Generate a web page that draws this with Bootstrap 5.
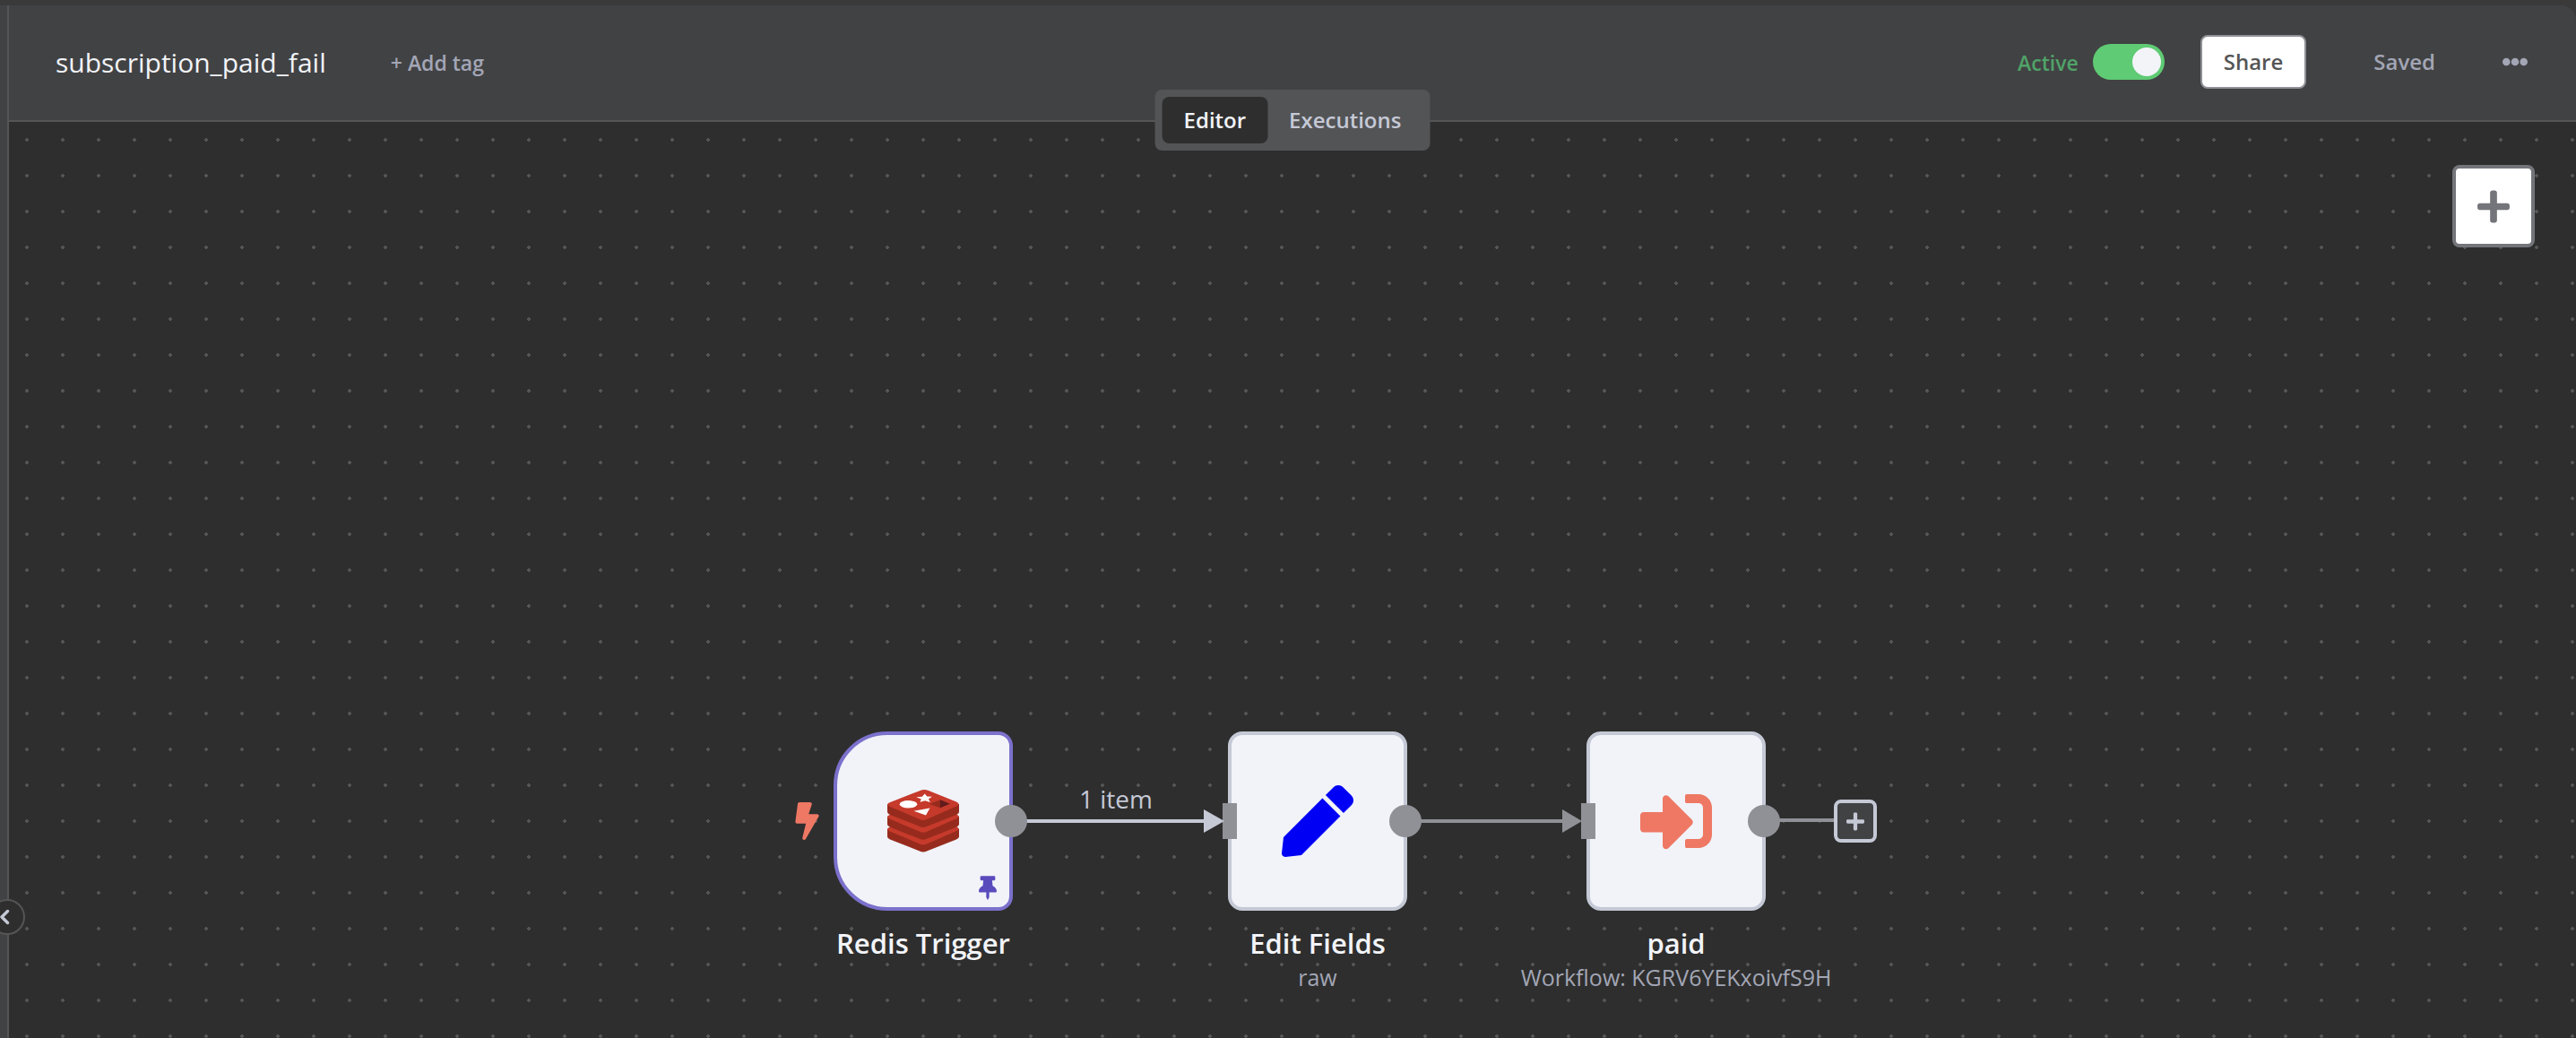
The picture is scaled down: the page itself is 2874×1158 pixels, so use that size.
<!DOCTYPE html>
<html lang="en">
<head>
<meta charset="utf-8">
<meta name="viewport" content="width=device-width, initial-scale=1">
<title>subscription_paid_fail</title>
<link href="https://cdn.jsdelivr.net/npm/bootstrap@5.3.0/dist/css/bootstrap.min.css" rel="stylesheet">
<style>
  :root {
    --panel: #414244;
    --canvas: #2e2e2e;
    --line: #555555;
    --muted: #a3a6b5;
    --soft: #c5c9d6;
    --bright: #f2f4f8;
  }
  body {
    font-family: "Open Sans", "Noto Sans", sans-serif;
    font-size: 24px;
    line-height: 32px;
    color: var(--bright);
    background: #3a3a3a;
    border-top: 6px solid #3a3a3a;
  }
  svg { display: block; }
  .side-rail { width: 10px; background: var(--panel); border-right: 2px solid var(--line); }
  .rail-toggle {
    left: -12px; bottom: 115px; width: 40px; height: 40px; z-index: 3;
    background: var(--canvas); border: 2px solid var(--line); border-radius: 50%;
  }
  .rail-toggle svg { margin-left: 9px; }
  .top-bar {
    height: 130px; padding: 0 46px 2px 52px;
    background: var(--panel); border-bottom: 2px solid var(--line);
    border-top-right-radius: 16px;
  }
  .flow-name { padding-top: 2px; font-size: 30px; line-height: 40px; font-weight: 400; }
  .tag-link, .active-label { padding-top: 2px; font-size: 23px; font-weight: 600; }
  .tag-link { margin-left: 72px; color: var(--muted); }
  .active-label { color: #50a368; }
  .form-switch .toggle-input {
    width: 80px; height: 40px; border: 0; cursor: pointer;
    background-color: #5fcb74; background-size: 40px 40px;
  }
  .form-switch .toggle-input:checked {
    background-color: #5fcb74;
    background-image: url("data:image/svg+xml,%3csvg xmlns='http://www.w3.org/2000/svg' viewBox='0 0 40 40'%3e%3ccircle cx='20' cy='20' r='16' fill='%23f2f4f8'/%3e%3c/svg%3e");
  }
  .share-btn {
    height: 60px; padding: 0 24px; margin-left: 40px;
    background: #fff; color: #555; border: 2px solid #909196; border-radius: 8px;
    font-size: 24px; font-weight: 600;
  }
  .saved-note { margin-left: 75px; color: var(--muted); font-weight: 600; }
  .more-btn { margin-left: 67px; padding: 8px; }
  .view-tabs {
    top: 94px; left: 50%; transform: translateX(-50%); z-index: 2;
    padding: 8px; background: #535456; border-radius: 8px;
  }
  .view-tabs .nav-link {
    height: 52px; padding: 10px 24px; border-radius: 8px;
    color: var(--soft); font-weight: 600;
  }
  .view-tabs .nav-link.active { background: var(--canvas); color: var(--bright); }
  .flow-canvas {
    background-color: var(--canvas);
    background-image: radial-gradient(circle at 20px 20px, var(--line) 0 2px, transparent 2px);
    background-size: 40px 40px;
  }
  .add-node {
    top: 48px; right: 46px; width: 92px; height: 92px;
    background: #fff; border: 4px solid #73757a; border-radius: 8px;
  }
  .wires { left: 0; top: 0; }
  .wire-label { left: 1146px; top: 735px; width: 178px; font-size: 28px; line-height: 40px; color: var(--soft); }
  .flow-node { width: 200px; top: 680px; }
  .node-redis { left: 920px; }
  .node-edit { left: 1360px; }
  .node-paid { left: 1760px; }
  .node-box {
    width: 200px; height: 200px; background: #f1f3f9;
    border: 4px solid var(--soft); border-radius: 16px;
  }
  .node-redis .node-box { border-color: #7b71cc; border-radius: 60px 16px 16px 60px; }
  .node-title { margin-top: 16px; font-size: 31px; line-height: 40px; font-weight: 600; white-space: nowrap; }
  .node-sub { font-size: 25px; line-height: 36px; color: var(--muted); white-space: nowrap; }
  .pin-mark { right: 14px; bottom: 8px; }
  .bolt-mark { left: -43px; top: 79px; }
  .add-next {
    left: 2036px; top: 756px; width: 48px; height: 48px;
    background: var(--panel); border: 4px solid var(--soft); border-radius: 8px;
  }
</style>
</head>
<body class="vh-100 d-flex overflow-hidden position-relative">
<aside class="side-rail flex-shrink-0">
  <button type="button" class="rail-toggle position-absolute p-0 d-flex align-items-center" aria-label="Expand sidebar">
    <svg width="12" height="18" viewBox="0 0 12 18" fill="none" stroke="#c5c9d6" stroke-width="3.4" stroke-linecap="round" stroke-linejoin="round"><path d="M9.5 2.5 3 9l6.500 6.500"/></svg>
  </button>
</aside>

<div class="flex-grow-1 d-flex flex-column position-relative">
  <header class="top-bar d-flex align-items-center flex-shrink-0">
    <h1 class="flow-name mb-0">subscription_paid_fail</h1>
    <a href="#" class="tag-link text-decoration-none">+ Add tag</a>
    <div class="form-check form-switch d-flex align-items-center gap-3 ms-auto mb-0 p-0">
      <label class="active-label" for="active-switch">Active</label>
      <input class="form-check-input toggle-input m-0" type="checkbox" role="switch" id="active-switch" checked>
    </div>
    <button type="button" class="btn share-btn">Share</button>
    <span class="saved-note">Saved</span>
    <button type="button" class="btn border-0 more-btn" aria-label="More actions">
      <svg width="28" height="10" viewBox="0 0 28 10" fill="#a3a6b5"><circle cx="4.300" cy="5" r="4.300"/><circle cx="14" cy="5" r="4.300"/><circle cx="23.700" cy="5" r="4.300"/></svg>
    </button>
  </header>

  <nav class="view-tabs nav flex-nowrap position-absolute">
    <a class="nav-link active" href="#" aria-current="page">Editor</a>
    <a class="nav-link" href="#">Executions</a>
  </nav>

  <main class="flow-canvas flex-grow-1 position-relative overflow-hidden">
    <button type="button" class="add-node position-absolute d-flex align-items-center justify-content-center p-0" aria-label="Add node">
      <svg width="36" height="41" viewBox="0 0 448 512" fill="#73757a"><path d="M416 208H272V64c0-17.670-14.330-32-32-32h-32c-17.670 0-32 14.330-32 32v144H32c-17.670 0-32 14.330-32 32v32c0 17.670 14.330 32 32 32h144v144c0 17.670 14.330 32 32 32h32c17.670 0 32-14.330 32-32V304h144c17.670 0 32-14.330 32-32v-32c0-17.670-14.330-32-32-32z"/></svg>
    </button>

    <section class="flow-node node-redis position-absolute d-flex flex-column align-items-center">
      <svg class="bolt-mark position-absolute" width="27" height="42" viewBox="0 0 320 512" fill="#ee7864"><path d="M296 160H180.600l42.600-129.800C227.200 15 215.700 0 200 0H56C44 0 33.800 8.900 32.200 20.800l-32 240C-1.700 275.200 9.500 288 24 288h118.700L96.600 482.500c-3.600 15.200 8 29.500 23.300 29.500 8.400 0 16.400-4.400 20.800-12l176-304c9.300-15.900-2.200-36-20.700-36z"/></svg>
      <div class="node-box position-relative d-flex align-items-center justify-content-center">
        <svg width="80" height="70" viewBox="0 0 80 70">
          <defs>
            <g id="redis-slab">
              <path fill="#962b1d" d="M0 16V25Q0 26.500 3 28L36 41Q40 43 44 41L77 28Q80 26.500 80 25V16z"/>
              <path fill="#c63a2b" d="M2 14.500 36 1.200Q41-1 46 1L77 13.500Q82 16 77 18.500L44 33Q40 35 36 33L3 19Q-2 16.500 2 14.500z"/>
            </g>
          </defs>
          <use href="#redis-slab" y="27.500"/>
          <use href="#redis-slab" y="13.800"/>
          <use href="#redis-slab"/>
          <ellipse cx="23.500" cy="16.200" rx="9.800" ry="4.200" fill="#fff"/>
          <path fill="#fff" d="M41.700 4.600 44.300 7.400 50 7.800 46 10.300 47.800 14 42 12.300 36.500 13.800 37.800 10.500 32.300 8.300 38.800 7.800zM29.500 23.700 47.500 20.500 43 28.600z"/>
          <path fill="#962b1d" d="M47 16 59 11.300V20.300z"/>
          <path fill="#621b1c" d="M59 11.300 70 15.700 59 20.300z"/>
        </svg>
        <svg class="pin-mark position-absolute" width="20" height="27" viewBox="0 0 384 512" fill="#5a4bbd"><path d="M298.028 214.267L285.793 96H328c13.255 0 24-10.745 24-24V24c0-13.255-10.745-24-24-24H56C42.745 0 32 10.745 32 24v48c0 13.255 10.745 24 24 24h42.207L85.972 214.267C37.465 236.820 0 277.261 0 328c0 13.255 10.745 24 24 24h136v104.007c0 1.242.289 2.467.845 3.578l24 48c2.941 5.882 11.364 5.893 14.311 0l24-48a8.008 8.008 0 0 0 .845-3.578V352h136c13.255 0 24-10.745 24-24-.001-51.029-37.983-91.330-85.973-113.733z"/></svg>
      </div>
      <div class="node-title">Redis Trigger</div>
    </section>

    <section class="flow-node node-edit position-absolute d-flex flex-column align-items-center">
      <div class="node-box d-flex align-items-center justify-content-center">
        <svg width="80" height="80" viewBox="0 0 512 512" fill="#0000f5"><path d="M290.740 93.240l128.020 128.020-277.990 277.990-114.140 12.600C11.350 513.540-1.560 500.620.140 485.340l12.700-114.220 277.900-277.880zm207.200-19.060l-60.110-60.110c-18.750-18.750-49.160-18.750-67.910 0l-56.550 56.550 128.020 128.020 56.550-56.550c18.750-18.760 18.750-49.160 0-67.910z"/></svg>
      </div>
      <div class="node-title">Edit Fields</div>
      <div class="node-sub">raw</div>
    </section>

    <section class="flow-node node-paid position-absolute d-flex flex-column align-items-center">
      <div class="node-box d-flex align-items-center justify-content-center">
        <svg width="80" height="80" viewBox="0 0 512 512" fill="#ee7864"><path d="M416 448h-84c-6.600 0-12-5.400-12-12v-40c0-6.600 5.400-12 12-12h84c17.700 0 32-14.300 32-32V160c0-17.700-14.300-32-32-32h-84c-6.600 0-12-5.400-12-12V76c0-6.600 5.400-12 12-12h84c53 0 96 43 96 96v192c0 53-43 96-96 96zm-47-201L201 79c-15-15-41-4.500-41 17v96H24c-13.300 0-24 10.700-24 24v96c0 13.300 10.700 24 24 24h136v96c0 21.500 26 32 41 17l168-168c9.300-9.400 9.300-24.600 0-34z"/></svg>
      </div>
      <div class="node-title">paid</div>
      <div class="node-sub">Workflow: KGRV6YEKxoivfS9H</div>
    </section>

    <svg class="wires position-absolute pe-none" width="2100" height="900" viewBox="0 0 2100 900" aria-hidden="true">
      <g fill="#909196">
        <path d="M1354 760h16v40h-16zM1754 760h16v40h-16z"/>
        <path d="M1560 778h174v4h-174zM1960 777h78v4h-78z"/>
        <path d="M1733 767l22 13-22 13z"/>
      </g>
      <path fill="#c5c9d6" d="M1120 778h213v-11l23 13-23 13v-11h-213z"/>
      <g fill="#909196"><circle cx="1118" cy="780" r="18"/><circle cx="1558" cy="780" r="18"/><circle cx="1958" cy="780" r="18"/></g>
    </svg>
    <div class="wire-label position-absolute text-center">1 item</div>
    <button type="button" class="add-next position-absolute d-flex align-items-center justify-content-center p-0" aria-label="Add next node">
      <svg width="20" height="23" viewBox="0 0 448 512" fill="#c5c9d6"><path d="M416 208H272V64c0-17.670-14.330-32-32-32h-32c-17.670 0-32 14.330-32 32v144H32c-17.670 0-32 14.330-32 32v32c0 17.670 14.330 32 32 32h144v144c0 17.670 14.330 32 32 32h32c17.670 0 32-14.330 32-32V304h144c17.670 0 32-14.330 32-32v-32c0-17.670-14.330-32-32-32z"/></svg>
    </button>
  </main>
</div>
<script src="https://cdn.jsdelivr.net/npm/bootstrap@5.3.0/dist/js/bootstrap.bundle.min.js"></script>
</body>
</html>
